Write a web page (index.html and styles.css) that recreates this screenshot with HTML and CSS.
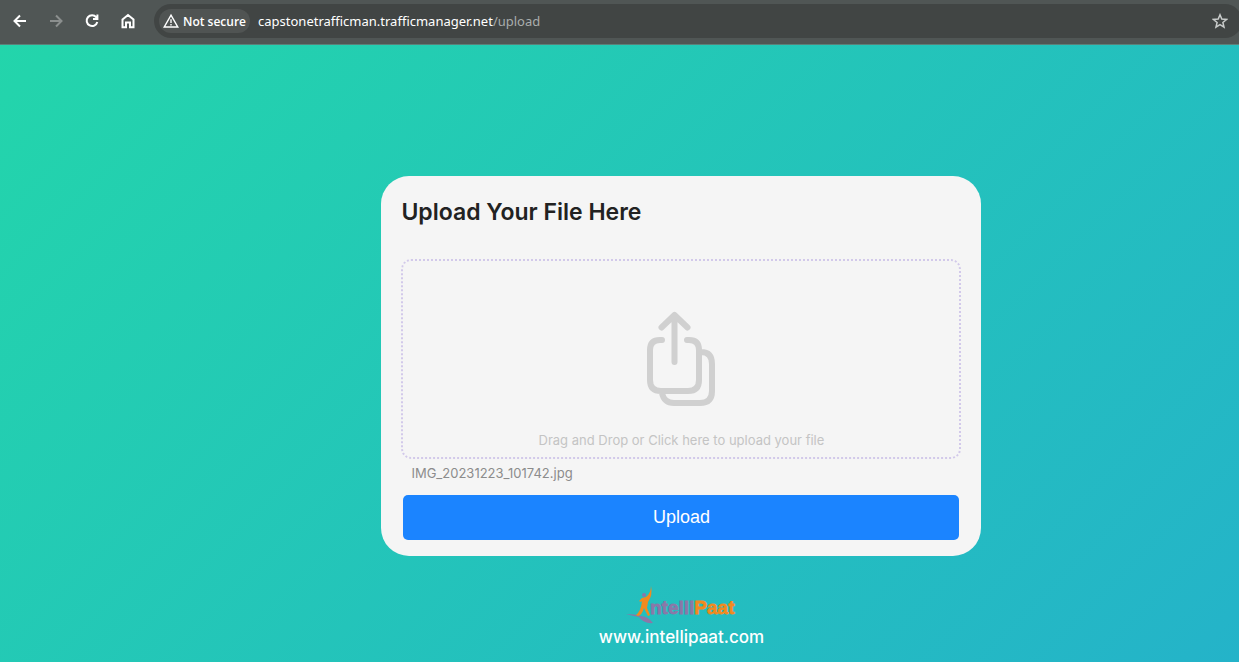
FILE: index.html
```html
<!DOCTYPE html>
<html lang="en">
<head>
<meta charset="utf-8">
<meta name="viewport" content="width=device-width, initial-scale=1">
<title>Upload</title>
<link rel="stylesheet" href="styles.css">
</head>
<body>
<header class="toolbar">
  <nav class="nav" aria-label="Browser">
    <button class="nav-btn" type="button" aria-label="Back">
      <svg viewBox="0 0 16 16"><path d="M14 8H3M8 2.500L2.500 8 8 13.500"/></svg>
    </button>
    <button class="nav-btn nav-btn-off" type="button" aria-label="Forward" disabled>
      <svg viewBox="0 0 16 16"><path d="M2 8h11M8 2.500L13.500 8 8 13.500"/></svg>
    </button>
    <button class="nav-btn" type="button" aria-label="Reload">
      <svg viewBox="0 0 16 16"><path d="M12.300 4.300A5.400 5.400 0 1 0 13.300 9M13.400 1.500V6H9"/></svg>
    </button>
    <button class="nav-btn" type="button" aria-label="Home">
      <svg viewBox="0 0 16 16"><path d="M2.500 6.500L8 2l5.500 4.500v7.700H10V9.500H6v4.700H2.500z"/></svg>
    </button>
  </nav>
  <div class="address">
    <button class="security" type="button">
      <svg viewBox="0 0 14 14"><path d="M7 1.800L13 12.300H1z"/><path d="M7 5.500v3.200M7 9.700v1.300"/></svg>
      Not secure
    </button>
    <div class="url">capstonetrafficman.trafficmanager.net<span class="url-path">/upload</span></div>
    <button class="star" type="button" aria-label="Bookmark">
      <svg viewBox="0 0 16 16"><path d="M8 1.800l1.800 4.300 4.700.4-3.600 3 1.100 4.600L8 11.600l-4 2.500 1.100-4.600-3.600-3 4.700-.4z"/></svg>
    </button>
  </div>
</header>
<main class="page">
  <form class="card">
    <h1 class="title">Upload Your File Here</h1>
    <label class="drop" for="file">
      <svg class="drop-icon" viewBox="0 0 70 96"><path d="M28.500 51V5M15.500 16.500L28.500 4l13 12.500M16 29h-2Q4 29 4 39v30q0 11 11 11h27q11 0 11-11V39q0-10-10-10h-2M16 82q2 10 12 10h26q12 0 12-12V53q0-12-11-12"/></svg>
      <span class="drop-text">Drag and Drop or Click here to upload your file</span>
      <input class="file" id="file" type="file">
    </label>
    <output class="file-name" for="file">IMG_20231223_101742.jpg</output>
    <button class="submit" type="button">Upload</button>
  </form>
  <footer class="brand">
    <svg class="logo" viewBox="0 0 110 38" role="img" aria-label="IntelliPaat">
      <path class="logo-purple" d="M0 28q9 0 15 2 8 1 12 7-9 1-14-6-6-1-13-3z"/>
      <path class="logo-orange" d="M25 0q2 9-3 16l-1 6 3 7-2 1-4-8q-2 7-6 8l-2-1q5-4 6-14l-1 1-2-1 3-3 4-1q5-4 5-11z"/>
      <circle class="logo-purple" cx="18" cy="9" r="2"/>
      <text class="logo-text" x="24" y="28"><tspan class="logo-purple">ntelli</tspan><tspan class="logo-orange">Paat</tspan></text>
    </svg>
    <a class="site" href="#">www.intellipaat.com</a>
  </footer>
</main>
</body>
</html>
```
FILE: styles.css
```css
* { box-sizing: border-box; }

body {
  display: flex;
  flex-direction: column;
  min-height: 100vh;
  margin: 0;
  overflow-x: hidden;
  font-family: Inter, "Open Sans", sans-serif;
}

button {
  padding: 0;
  border: 0;
  background: none;
  color: inherit;
  font: inherit;
}

.toolbar {
  display: flex;
  align-items: center;
  height: 45px;
  padding: 0 0 2px 12px;
  overflow: hidden;
  background: #505655;
  border-bottom: 1px solid #5c8079;
  color: #fff;
  font-family: "Noto Sans", sans-serif;
}

.nav { display: flex; gap: 20px; }
.nav-btn { display: flex; }
.nav-btn-off { color: #8b8f8e; }

.toolbar svg {
  width: 16px;
  height: 16px;
  fill: none;
  stroke: currentColor;
  stroke-width: 2;
}

.address {
  display: flex;
  flex: 1;
  align-items: center;
  height: 34px;
  margin: 0 -3px 0 18px;
  padding: 0 14px 0 5px;
  border-radius: 17px;
  background: #414544;
}

.security {
  display: flex;
  align-items: center;
  gap: 4px;
  height: 24px;
  padding: 0 4px;
  border-radius: 12px;
  background: #505453;
  font-family: "Open Sans", sans-serif;
  font-size: 12px;
  font-weight: 600;
}

.toolbar .security svg { stroke-width: 1.2; }
.url { flex: 1; margin-left: 8px; font-size: 13px; }
.url-path { color: #a9adac; }
.star { display: flex; color: #c9cccb; }
.toolbar .star svg { stroke-width: 1.5; }

.page {
  display: flex;
  flex: 1;
  flex-direction: column;
  align-items: center;
  justify-content: flex-end;
  padding: 131px 0 12px 10vw;
  background: linear-gradient(135deg, #23d5ab, #24b3c9);
}

.card {
  display: flex;
  flex-direction: column;
  width: 100%;
  max-width: 600px;
  padding: 20px 20px 16px;
  border-radius: 28px;
  background: #f5f5f5;
}

.title {
  margin: 0 0 31px;
  color: #222;
  font-size: 23px;
  font-weight: 600;
  line-height: 32px;
}

.drop {
  position: relative;
  display: flex;
  flex-direction: column;
  align-items: center;
  height: 200px;
  padding-top: 50px;
  border: 2px dotted #d2c9ea;
  border-radius: 10px;
}

.drop-icon {
  width: 70px;
  height: 96px;
  fill: none;
  stroke: #d0d0d0;
  stroke-width: 6;
  stroke-linecap: round;
  stroke-linejoin: round;
}

.drop-text {
  margin-top: 23px;
  color: #c4c4c4;
  font-size: 13px;
  line-height: 20px;
}

.file {
  position: absolute;
  inset: 0;
  width: 100%;
  opacity: 0;
}

.file-name {
  margin: 4px 10px 12px;
  color: #8c8c8c;
  font-size: 13px;
  line-height: 20px;
}

.submit {
  height: 45px;
  margin: 0 2px;
  border-radius: 5px;
  background: #1b84ff;
  color: #fff;
  font-family: "Liberation Sans", Arial, sans-serif;
  font-size: 18px;
}

.brand {
  display: flex;
  flex-direction: column;
  align-items: center;
  margin-top: 30px;
}

.logo { width: 110px; height: 38px; }
.logo-purple { fill: #8a78a8; stroke: #8a78a8; }
.logo-orange { fill: #f28a1e; stroke: #f28a1e; }
.logo path, .logo circle { stroke: none; }

.logo-text {
  font-family: "Liberation Sans", Arial, sans-serif;
  font-size: 19px;
  font-weight: 700;
  stroke-width: 0.8;
}

.site {
  color: #fff;
  font-size: 17px;
  font-weight: 500;
  line-height: 26px;
  text-decoration: none;
}
```
